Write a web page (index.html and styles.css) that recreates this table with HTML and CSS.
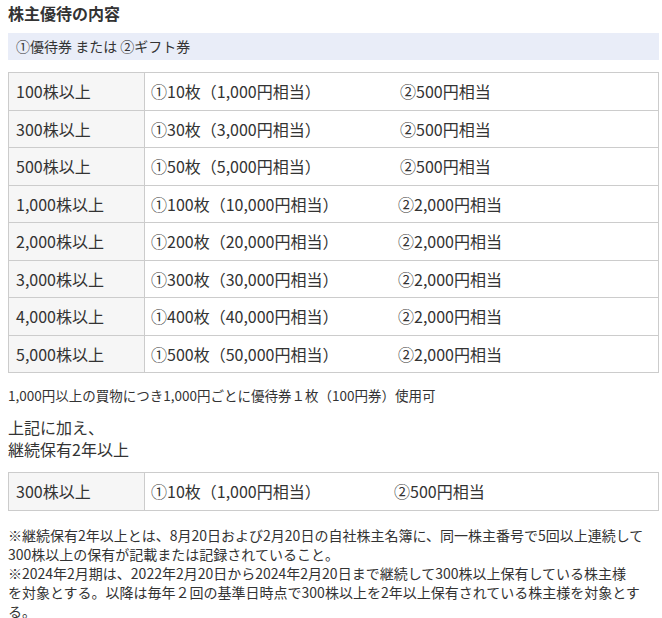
FILE: index.html
```html
<!DOCTYPE html>
<html lang="ja">
<head>
<meta charset="utf-8">
<title>株主優待の内容</title>
<link rel="stylesheet" href="styles.css">
</head>
<body>
<div class="page">
  <h3 class="title">株主優待の内容</h3>
  <div class="band">①優待券 または ②ギフト券</div>
  <table class="benefit">
    <tr><th>100株以上</th><td><span class="a w1">①10枚（1,000円相当）</span>②500円相当</td></tr>
    <tr><th>300株以上</th><td><span class="a w1">①30枚（3,000円相当）</span>②500円相当</td></tr>
    <tr><th>500株以上</th><td><span class="a w1">①50枚（5,000円相当）</span>②500円相当</td></tr>
    <tr><th>1,000株以上</th><td><span class="a w2">①100枚（10,000円相当）</span>②2,000円相当</td></tr>
    <tr><th>2,000株以上</th><td><span class="a w2">①200枚（20,000円相当）</span>②2,000円相当</td></tr>
    <tr><th>3,000株以上</th><td><span class="a w2">①300枚（30,000円相当）</span>②2,000円相当</td></tr>
    <tr><th>4,000株以上</th><td><span class="a w2">①400枚（40,000円相当）</span>②2,000円相当</td></tr>
    <tr><th>5,000株以上</th><td><span class="a w2">①500枚（50,000円相当）</span>②2,000円相当</td></tr>
  </table>
  <p class="small">1,000円以上の買物につき1,000円ごとに優待券１枚（100円券）使用可</p>
  <p class="lead">上記に加え、<br>継続保有2年以上</p>
  <table class="benefit second">
    <tr><th>300株以上</th><td><span class="a w3">①10枚（1,000円相当）</span>②500円相当</td></tr>
  </table>
  <p class="notes">※継続保有2年以上とは、8月20日および2月20日の自社株主名簿に、同一株主番号で5回以上連続して<br>300株以上の保有が記載または記録されていること。<br>※2024年2月期は、2022年2月20日から2024年2月20日まで継続して300株以上保有している株主様<br>を対象とする。以降は毎年２回の基準日時点で300株以上を2年以上保有されている株主様を対象とす<br>る。</p>
</div>
</body>
</html>
```
FILE: styles.css
```css
html, body {
  margin: 0;
  padding: 0;
  background: #fff;
}
body {
  font-family: "Noto Sans CJK JP", "Noto Sans", sans-serif;
  color: #333;
}
.page {
  padding: 3px 3px 0 8px;
}
.title {
  margin: 0 0 10px;
  font-size: 16px;
  line-height: 20px;
  font-weight: bold;
  color: #333;
}
.band {
  background: #e9edf8;
  height: 27px;
  line-height: 27px;
  font-size: 14px;
  padding-left: 8px;
  margin-bottom: 12px;
}
.benefit {
  width: 100%;
  border-collapse: collapse;
  font-size: 16px;
}
.benefit th,
.benefit td {
  border: 1px solid #ccc;
  line-height: 22.5px;
  padding: 7px 6px;
  text-align: left;
  font-weight: normal;
  white-space: nowrap;
}
.benefit th {
  width: 122px;
  background: #f6f6f6;
  padding-left: 7px;
}
.benefit td {
  background: #fff;
}
.a {
  display: inline-block;
}
.w1 { width: 249px; }
.w2 { width: 247px; }
.w3 { width: 243px; }
.small {
  margin: 12px 0 0;
  font-size: 13.5px;
  line-height: 20px;
}
.lead {
  margin: 11px 0 0;
  font-size: 16px;
  line-height: 22px;
}
.second {
  margin-top: 12px;
}
.notes {
  margin: 15px 0 0;
  font-size: 14px;
  line-height: 19px;
  white-space: nowrap;
}
```
